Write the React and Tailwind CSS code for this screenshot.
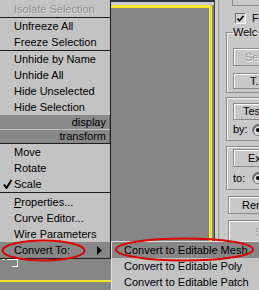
import React from 'react';

const MENU_TOP = [
  { label: 'Unfreeze All' },
  { label: 'Freeze Selection' },
];

const MENU_HIDE = [
  { label: 'Unhide by Name' },
  { label: 'Unhide All' },
  { label: 'Hide Unselected' },
  { label: 'Hide Selection' },
];

const MENU_TRANSFORM = [
  { label: 'Move' },
  { label: 'Rotate' },
  { label: 'Scale', checked: true },
];

const MENU_MISC = [
  { label: 'Properties...', mnemonic: 'P' },
  { label: 'Curve Editor...' },
  { label: 'Wire Parameters' },
];

const SUBMENU = [
  { label: 'Convert to Editable Mesh', active: true },
  { label: 'Convert to Editable Poly' },
  { label: 'Convert to Editable Patch' },
];

const CheckMark = () => (
  <svg width="9" height="10" viewBox="0 0 9 10">
    <path d="M1 5.5 L3.5 9 L8.5 1" fill="none" stroke="#000" strokeWidth="2" />
  </svg>
);

const MenuItem = ({ item, disabled, tall }) => {
  const text = item.mnemonic ? (
    <span>
      <span className="underline underline-offset-1">{item.mnemonic}</span>
      {item.label.slice(1)}
    </span>
  ) : (
    item.label
  );
  return (
    <div
      className={`flex items-center pl-[3px] leading-4 ${tall ? 'h-[17px]' : 'h-4'} ${item.active ? 'bg-[#878787]' : ''} ${disabled ? 'text-[#8e8e8e] [text-shadow:1px_1px_0_#dcdcdc]' : ''}`}
    >
      <span className="flex w-[11px] items-center">{item.checked && <CheckMark />}</span>
      <span className="whitespace-nowrap">{text}</span>
      {item.arrow && (
        <svg className="ml-auto mr-[8px]" width="5" height="9" viewBox="0 0 5 9">
          <polygon points="0,0 5,4.5 0,9" fill="#000" />
        </svg>
      )}
    </div>
  );
};

const Separator = () => <div className="h-px bg-[#1e1e1e]" />;

const QuadBar = ({ label, tall }) => (
  <div
    className={`flex items-center justify-end border-r border-[#6e6e6e] bg-[#888888] pr-[3px] leading-none ${tall ? 'h-[14px]' : 'h-[13px]'}`}
  >
    {label}
  </div>
);

const ContextMenu = () => (
  <div className="absolute left-0 top-0 w-[111px] border-b border-r border-[#1e1e1e] bg-[#c3c3c3]">
    <MenuItem item={{ label: 'Isolate Selection' }} disabled tall />
    <Separator />
    {MENU_TOP.map((it) => (
      <MenuItem key={it.label} item={it} />
    ))}
    <Separator />
    {MENU_HIDE.map((it) => (
      <MenuItem key={it.label} item={it} />
    ))}
    <QuadBar label="display" tall />
    <div className="h-px bg-[#c3c3c3]" />
    <QuadBar label="transform" />
    <Separator />
    {MENU_TRANSFORM.map((it) => (
      <MenuItem key={it.label} item={it} />
    ))}
    <Separator />
    <div className="h-px bg-[#c3c3c3]" />
    {MENU_MISC.map((it) => (
      <MenuItem key={it.label} item={it} />
    ))}
    <MenuItem item={{ label: 'Convert To:', active: true, arrow: true }} />
  </div>
);

const SubMenu = () => (
  <div className="absolute left-[111px] top-[241px] w-[160px] border-l border-t border-[#dedede] bg-[#c3c3c3]">
    {SUBMENU.map((it) => (
      <div
        key={it.label}
        className={`flex h-4 items-center whitespace-nowrap pl-[12px] leading-4 ${it.active ? 'bg-[#878787]' : ''}`}
      >
        {it.label}
      </div>
    ))}
  </div>
);

const Viewport = () => (
  <div className="flex h-full w-[214px] shrink-0 flex-col">
    <div className="h-[2px] bg-[#2b313a]" />
    <div className="h-[3px] bg-[#c9ccd2]" />
    <div className="relative h-[277px] w-[212px] border-b-2 border-r-[3px] border-t-[3px] border-[#f3e62a] bg-[#868686]">
      <svg className="absolute left-[2px] top-[251px]" width="18" height="9" viewBox="0 0 18 9">
        <path d="M0 0.5 H3 M5 0.5 H15.5 V7.5 H10" fill="none" stroke="#fff" strokeWidth="1" />
      </svg>
    </div>
  </div>
);

const Button = ({ children, className = '', disabled }) => (
  <div
    className={`flex w-[80px] shrink-0 items-center border border-[#8a8a8a] bg-[#c8c8c8] leading-none shadow-[inset_1px_1px_0_#fff] ${disabled ? 'text-[#9a9a9a] [text-shadow:1px_1px_0_#f2f2f2]' : ''} ${className}`}
  >
    {children}
  </div>
);

const Radio = () => (
  <div className="flex h-[12px] w-[12px] shrink-0 items-center justify-center rounded-full border border-[#7a7a7a] bg-[#dcdcdc] shadow-[inset_1px_1px_0_#555]">
    <div className="h-[4px] w-[4px] rounded-full bg-black" />
  </div>
);

const CommandPanel = () => (
  <div className="flex h-full w-[45px] shrink-0">
    <div className="w-px bg-[#3c3c3c]" />
    <div className="w-[3px] bg-[#d2d2d2]" />
    <div className="w-px bg-[#9a9a9a]" />
    <div className="flex flex-1 flex-col overflow-hidden bg-[#c8c8c8]">
      <div className="ml-[13px] h-[6px] w-[80px] shrink-0 border-b border-l border-[#8a8a8a]" />

      <div className="ml-[16px] mt-[7px] flex h-[11px] shrink-0 items-center gap-[6px]">
        <div className="flex h-[11px] w-[11px] shrink-0 items-center justify-center border border-b-white border-l-[#6e6e6e] border-r-white border-t-[#6e6e6e] bg-[#d6d6d6]">
          <svg width="7" height="7" viewBox="0 0 7 7">
            <path d="M0.5 3.5 L2.5 5.8 L6.5 0.8" fill="none" stroke="#000" strokeWidth="1.6" />
          </svg>
        </div>
        <span className="leading-none">F</span>
      </div>

      <fieldset className="ml-[7px] mt-[2px] w-[80px] shrink-0 border border-[#8a8a8a] pb-[3px] pl-[6px] shadow-[inset_1px_1px_0_#f4f4f4]">
        <legend className="leading-[13px]">Welc</legend>
        <Button disabled className="mt-[9px] h-[18px] pl-[11px]">Se</Button>
        <Button className="mt-[7px] h-[16px] pl-[16px]">T.</Button>
      </fieldset>

      <div className="ml-[7px] mt-[4px] w-[80px] shrink-0 border border-[#8a8a8a] pb-[4px] pl-[6px] pt-[5px] shadow-[inset_1px_1px_0_#f4f4f4]">
        <Button className="h-[17px] pl-[9px]">Tes</Button>
        <div className="mt-[3px] flex h-[13px] items-center">
          <span className="w-[19px] leading-none">by:</span>
          <Radio />
        </div>
      </div>

      <div className="ml-[7px] mt-[5px] w-[80px] shrink-0 border border-[#8a8a8a] pb-[5px] pl-[6px] pt-[2px] shadow-[inset_1px_1px_0_#f4f4f4]">
        <Button className="h-[18px] pl-[14px]">Ex</Button>
        <div className="mt-[5px] flex h-[12px] items-center">
          <span className="w-[19px] leading-none">to:</span>
          <Radio />
        </div>
      </div>

      <Button className="ml-[9px] mt-[6px] h-[18px] pl-[13px]">Ren</Button>
      <Button disabled className="ml-[9px] mt-[6px] h-[24px] pl-[26px]">S</Button>
    </div>
  </div>
);

const Annotations = () => (
  <svg className="pointer-events-none absolute left-0 top-0" width="259" height="290" viewBox="0 0 259 290">
    <ellipse cx="43.5" cy="250.5" rx="41" ry="10" fill="none" stroke="#e00000" strokeWidth="2" />
    <ellipse cx="184.5" cy="249.5" rx="68.5" ry="11" fill="none" stroke="#e00000" strokeWidth="2" />
  </svg>
);

export default function App() {
  return (
    <div className="relative flex h-[290px] w-[259px] overflow-hidden bg-[#868686] font-['Liberation_Sans',Arial,sans-serif] text-[11px] text-black">
      <Viewport />
      <CommandPanel />
      <ContextMenu />
      <SubMenu />
      <Annotations />
    </div>
  );
}
